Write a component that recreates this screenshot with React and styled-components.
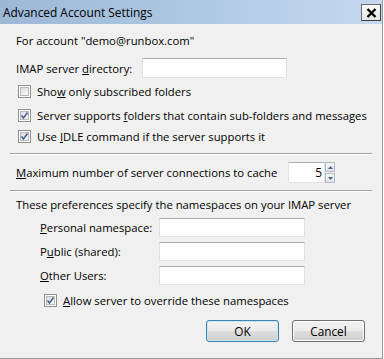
import styled, { createGlobalStyle } from 'styled-components';

const GlobalStyle = createGlobalStyle`
  html, body {
    margin: 0;
    padding: 0;
    background: #ffffff;
  }
  body {
    font-family: "Open Sans", "Noto Sans", sans-serif;
    font-size: 11.3px;
    color: #000;
  }
`;

function CheckIcon({ checked }) {
  return (
    <svg width="13" height="13" viewBox="0 0 13 13">
      <defs>
        <linearGradient id="cbg" x1="0" y1="0" x2="1" y2="1">
          <stop offset="0" stopColor="#dcdcdc" />
          <stop offset="1" stopColor="#fbfbfb" />
        </linearGradient>
      </defs>
      <rect x="0.5" y="0.5" width="12" height="12" fill="#fff" stroke="#8e8f8f" />
      <rect x="2.5" y="2.5" width="8" height="8" fill="url(#cbg)" stroke="#b8b8b8" />
      {checked && (
        <path d="M3.5 6.5 L5.5 9 L9.5 3.5" fill="none" stroke="#4a5f97" strokeWidth="1.6" />
      )}
    </svg>
  );
}

function Check({ checked, children, $mt, $indent }) {
  return (
    <CheckRow $mt={$mt} $indent={$indent}>
      <CheckIcon checked={checked} />
      <span>{children}</span>
    </CheckRow>
  );
}

export default function App() {
  return (
    <>
      <GlobalStyle />
      <Window>
        <TitleBar>
          <Title>Advanced Account Settings</Title>
          <CloseButton>
            <svg width="11" height="10" viewBox="0 0 11 10">
              <path d="M1.5 1 L9.5 9 M9.5 1 L1.5 9" stroke="#000" strokeWidth="2.4" />
            </svg>
          </CloseButton>
        </TitleBar>
        <Body>
          <TextRow $mt={0}>For account "demo@runbox.com"</TextRow>
          <FieldRow $mt={9} $h={20}>
            <Label $w={126}>IMAP server <u>d</u>irectory:</Label>
            <TextInput $w={145} />
          </FieldRow>
          <Check $mt={5}>Sho<u>w</u> only subscribed folders</Check>
          <Check checked $mt={8}>Server supports <u>f</u>olders that contain sub-folders and messages</Check>
          <Check checked $mt={5}>Use <u>I</u>DLE command if the server supports it</Check>
          <Separator $mt={9} />
          <FieldRow $mt={7} $h={21}>
            <Label $w={272}><u>M</u>aximum number of server connections to cache</Label>
            <Spinner>
              <SpinValue>5</SpinValue>
              <SpinArrows>
                <SpinHalf>
                  <svg width="5" height="3" viewBox="0 0 5 3"><path d="M0 3 L2.5 0 L5 3 Z" fill="#4d6185" /></svg>
                </SpinHalf>
                <SpinHalf>
                  <svg width="5" height="3" viewBox="0 0 5 3"><path d="M0 0 L2.5 3 L5 0 Z" fill="#4d6185" /></svg>
                </SpinHalf>
              </SpinArrows>
            </Spinner>
          </FieldRow>
          <Separator $mt={7} />
          <TextRow $mt={5}>These preferences specify the namespaces on your IMAP server</TextRow>
          <FieldRow $mt={5} $h={19} $indent={24}>
            <Label $w={119}><u>P</u>ersonal namespace:</Label>
            <TextInput $w={146} />
          </FieldRow>
          <FieldRow $mt={5} $h={19} $indent={24}>
            <Label $w={119}>P<u>u</u>blic (shared):</Label>
            <TextInput $w={146} />
          </FieldRow>
          <FieldRow $mt={5} $h={19} $indent={24}>
            <Label $w={119}><u>O</u>ther Users:</Label>
            <TextInput $w={146} />
          </FieldRow>
          <Check checked $mt={7} $indent={26}><u>A</u>llow server to override these namespaces</Check>
          <ButtonRow>
            <Button $default>OK</Button>
            <Button>Cancel</Button>
          </ButtonRow>
        </Body>
      </Window>
    </>
  );
}

const Window = styled.div`
  width: 383px;
  height: 359px;
  box-sizing: border-box;
  background: #f0f0f0;
  border-right: 1px solid #9a9a9a;
  border-bottom: 1px solid #9a9a9a;
  display: flex;
  flex-direction: column;
`;

const TitleBar = styled.div`
  height: 24px;
  flex: none;
  display: flex;
  align-items: center;
  justify-content: space-between;
  padding: 0 1px 0 3px;
  background: linear-gradient(to right, #9db8d6 0%, #acc6e2 45%, #c5d9ee 100%);
`;

const Title = styled.div`
  font-size: 11.9px;
  color: #000;
`;

const CloseButton = styled.div`
  width: 20px;
  height: 17px;
  margin-top: 1px;
  box-sizing: border-box;
  display: flex;
  align-items: center;
  justify-content: center;
  background: linear-gradient(#fcfcfc, #e6e6e6);
  border: 1px solid #6b6b6b;
  border-right-color: #404040;
  border-bottom-color: #404040;
`;

const Body = styled.div`
  flex: 1;
  display: flex;
  flex-direction: column;
  padding: 9px 12px 0 16px;
`;

const TextRow = styled.div`
  height: 16px;
  line-height: 16px;
  margin-top: ${(p) => p.$mt}px;
  white-space: nowrap;
`;

const FieldRow = styled.div`
  height: ${(p) => p.$h}px;
  margin-top: ${(p) => p.$mt}px;
  padding-left: ${(p) => p.$indent || 0}px;
  display: flex;
  align-items: center;
`;

const Label = styled.div`
  width: ${(p) => p.$w}px;
  flex: none;
  white-space: nowrap;
  color: #000;
`;

const TextInput = styled.div`
  width: ${(p) => p.$w}px;
  height: 100%;
  box-sizing: border-box;
  background: #fff;
  border: 1px solid #e2e3ea;
  border-top-color: #abadb3;
  border-left-color: #dbdfe6;
  border-right-color: #dbdfe6;
`;

const CheckRow = styled.div`
  height: 16px;
  margin-top: ${(p) => p.$mt}px;
  padding-left: ${(p) => (p.$indent || 0) + 2}px;
  display: flex;
  align-items: center;
  gap: 6px;
  white-space: nowrap;

  svg {
    flex: none;
  }
`;

const Separator = styled.div`
  height: 1px;
  margin: ${(p) => p.$mt}px 0 0 -6px;
  width: 362px;
  background: #a0a0a0;
  border-bottom: 1px solid #ffffff;
`;

const Spinner = styled.div`
  display: flex;
  height: 100%;
`;

const SpinValue = styled.div`
  width: 37px;
  box-sizing: border-box;
  background: #fff;
  border: 1px solid #e2e3ea;
  border-top-color: #abadb3;
  text-align: right;
  padding-right: 2px;
  line-height: 19px;
  font-size: 12px;
`;

const SpinArrows = styled.div`
  width: 10px;
  display: flex;
  flex-direction: column;
  gap: 1px;
`;

const SpinHalf = styled.div`
  flex: 1;
  display: flex;
  align-items: center;
  justify-content: center;
  box-sizing: border-box;
  border: 1px solid #b4b9c2;
  background: linear-gradient(#f4f6f9, #dde3ec);
`;

const ButtonRow = styled.div`
  margin-top: 12px;
  display: flex;
  justify-content: flex-end;
  gap: 13px;
  padding-right: 5px;
`;

const Button = styled.div`
  width: 73px;
  height: 22px;
  box-sizing: border-box;
  border-radius: 3px;
  border: 1px solid ${(p) => (p.$default ? '#3c7fb1' : '#707070')};
  box-shadow: ${(p) => (p.$default ? 'inset 0 0 0 1px #c8e9f8' : 'inset 0 0 0 1px #fbfbfb')};
  background: linear-gradient(#f2f2f2 0%, #ebebeb 50%, #dddddd 51%, #cfcfcf 100%);
  display: flex;
  align-items: center;
  justify-content: center;
  font-size: 11.8px;
`;
